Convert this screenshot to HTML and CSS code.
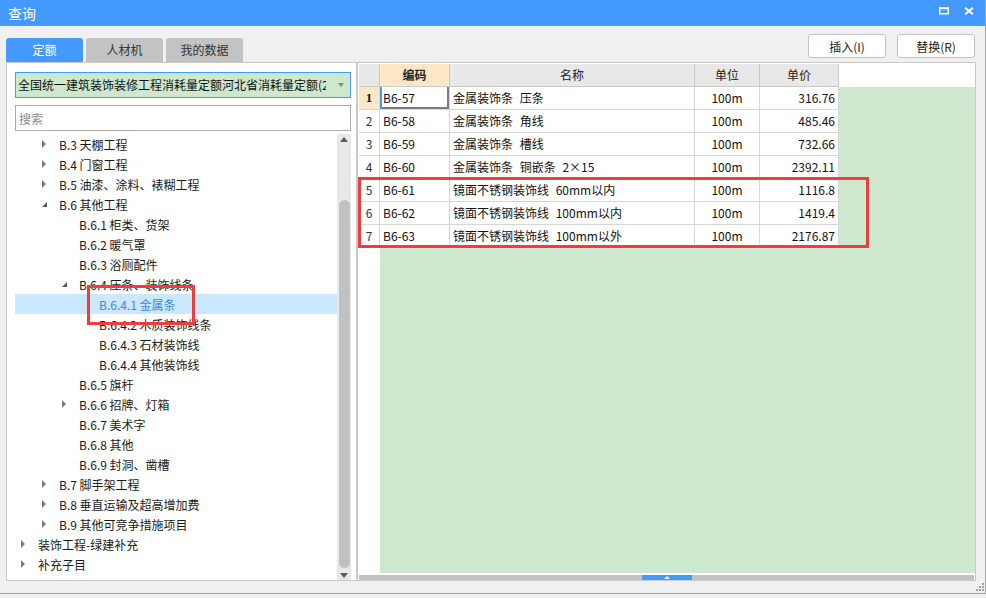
FILE: index.html
```html
<!DOCTYPE html>
<html lang="zh-CN">
<head>
<meta charset="utf-8">
<title>查询</title>
<link rel="stylesheet" href="styles.css">
</head>
<body>
<div class="window">
  <div class="titlebar">
    <span class="title">查询</span>
    <div class="winctl">
      <svg class="ico-max" width="10" height="8" viewBox="0 0 10 8"><path fill="#fff" fill-rule="evenodd" d="M0 0H10V7.5H0Z M1.5 2.3V6H8.5V2.3Z"/></svg>
      <svg class="ico-close" width="10" height="8" viewBox="0 0 10 8"><path d="M1.2 0.8L8.8 7.2M8.8 0.8L1.2 7.2" stroke="#fff" stroke-width="2.1"/></svg>
    </div>
  </div>

  <div class="toolbar">
    <div class="tabs">
      <div class="tab active">定额</div>
      <div class="tab">人材机</div>
      <div class="tab">我的数据</div>
    </div>
    <div class="actions">
      <button class="btn">插入(I)</button>
      <button class="btn">替换(R)</button>
    </div>
  </div>

  <div class="panes">
    <div class="left">
      <div class="combo">
        <span class="combo-text">全国统一建筑装饰装修工程消耗量定额河北省消耗量定额(2012)</span>
        <span class="combo-arrow"></span>
      </div>
      <input class="search" type="text" placeholder="搜索">
      <div class="treewrap">
        <div class="tree">
          <div class="node l1"><span class="tw"><i class="col"></i></span>B.3 天棚工程</div>
          <div class="node l1"><span class="tw"><i class="col"></i></span>B.4 门窗工程</div>
          <div class="node l1"><span class="tw"><i class="col"></i></span>B.5 油漆、涂料、裱糊工程</div>
          <div class="node l1"><span class="tw"><i class="exp"></i></span>B.6 其他工程</div>
          <div class="node l2"><span class="tw"></span>B.6.1 柜类、货架</div>
          <div class="node l2"><span class="tw"></span>B.6.2 暖气罩</div>
          <div class="node l2"><span class="tw"></span>B.6.3 浴厕配件</div>
          <div class="node l2"><span class="tw"><i class="exp"></i></span>B.6.4 压条、装饰线条</div>
          <div class="node l3 sel"><span class="tw"></span>B.6.4.1 金属条</div>
          <div class="node l3"><span class="tw"></span>B.6.4.2 木质装饰线条</div>
          <div class="node l3"><span class="tw"></span>B.6.4.3 石材装饰线</div>
          <div class="node l3"><span class="tw"></span>B.6.4.4 其他装饰线</div>
          <div class="node l2"><span class="tw"></span>B.6.5 旗杆</div>
          <div class="node l2"><span class="tw"><i class="col"></i></span>B.6.6 招牌、灯箱</div>
          <div class="node l2"><span class="tw"></span>B.6.7 美术字</div>
          <div class="node l2"><span class="tw"></span>B.6.8 其他</div>
          <div class="node l2"><span class="tw"></span>B.6.9 封洞、凿槽</div>
          <div class="node l1"><span class="tw"><i class="col"></i></span>B.7 脚手架工程</div>
          <div class="node l1"><span class="tw"><i class="col"></i></span>B.8 垂直运输及超高增加费</div>
          <div class="node l1"><span class="tw"><i class="col"></i></span>B.9 其他可竞争措施项目</div>
          <div class="node l0"><span class="tw"><i class="col"></i></span>装饰工程-绿建补充</div>
          <div class="node l0"><span class="tw"><i class="col"></i></span>补充子目</div>
        </div>
        <div class="vscroll">
          <span class="sc-up"></span>
          <span class="sc-thumb"></span>
          <span class="sc-down"></span>
        </div>
      </div>
      <div class="mark mark-left"></div>
    </div>

    <div class="right">
      <div class="grid">
        <div class="h rn"></div>
        <div class="h code">编码</div>
        <div class="h">名称</div>
        <div class="h">单位</div>
        <div class="h">单价</div>
        <div class="h blank"></div>

        <div class="c rn rn-sel">1</div>
        <div class="c code cur">B6-57</div>
        <div class="c name">金属装饰条 压条</div>
        <div class="c unit">100m</div>
        <div class="c price">316.76</div>
        <div class="g"></div>

        <div class="c rn">2</div>
        <div class="c code">B6-58</div>
        <div class="c name">金属装饰条 角线</div>
        <div class="c unit">100m</div>
        <div class="c price">485.46</div>
        <div class="g"></div>

        <div class="c rn">3</div>
        <div class="c code">B6-59</div>
        <div class="c name">金属装饰条 槽线</div>
        <div class="c unit">100m</div>
        <div class="c price">732.66</div>
        <div class="g"></div>

        <div class="c rn">4</div>
        <div class="c code">B6-60</div>
        <div class="c name">金属装饰条 铜嵌条 2×15</div>
        <div class="c unit">100m</div>
        <div class="c price">2392.11</div>
        <div class="g"></div>

        <div class="c rn">5</div>
        <div class="c code">B6-61</div>
        <div class="c name">镜面不锈钢装饰线 60mm以内</div>
        <div class="c unit">100m</div>
        <div class="c price">1116.8</div>
        <div class="g"></div>

        <div class="c rn">6</div>
        <div class="c code">B6-62</div>
        <div class="c name">镜面不锈钢装饰线 100mm以内</div>
        <div class="c unit">100m</div>
        <div class="c price">1419.4</div>
        <div class="g"></div>

        <div class="c rn">7</div>
        <div class="c code">B6-63</div>
        <div class="c name">镜面不锈钢装饰线 100mm以外</div>
        <div class="c unit">100m</div>
        <div class="c price">2176.87</div>
        <div class="g"></div>

        <div class="rn-fill"></div>
        <div class="g g-fill"></div>
      </div>
      <div class="hgap"></div>
      <div class="hscroll"><span class="hthumb"></span></div>
      <div class="mark mark-right"></div>
    </div>
  </div>

  <svg class="grip" width="10" height="9" viewBox="0 0 10 9">
    <rect x="8" y="0" width="2" height="2" fill="#a0a0a0"/>
    <rect x="5" y="3" width="2" height="2" fill="#a0a0a0"/>
    <rect x="8" y="3" width="2" height="2" fill="#a0a0a0"/>
    <rect x="2" y="6" width="2" height="2" fill="#a0a0a0"/>
    <rect x="5" y="6" width="2" height="2" fill="#a0a0a0"/>
    <rect x="8" y="6" width="2" height="2" fill="#a0a0a0"/>
  </svg>
</div>
</body>
</html>
```

FILE: styles.css
```css
* { box-sizing: border-box; }

body {
  margin: 0;
  background: #f0f0f0;
  font-family: "Noto Sans CJK SC", "Noto Sans", sans-serif;
  font-size: 12px;
  color: #1e1e1e;
}

.window {
  position: relative;
  width: 986px;
  height: 594px;
  border-right: 1px solid #a6a6a6;
  border-bottom: 1px solid #a6a6a6;
  display: flex;
  flex-direction: column;
}

/* title bar */
.titlebar {
  flex: none;
  height: 26px;
  background: #4499ff;
  color: #fff;
  display: flex;
  align-items: center;
  justify-content: space-between;
  padding: 0 11px 0 8px;
}
.title { font-size: 14px; line-height: 26px; }
.winctl { display: flex; align-items: center; gap: 15px; margin-top: -4px; }

/* toolbar */
.toolbar {
  flex: none;
  height: 36px;
  display: flex;
  justify-content: space-between;
  padding: 0 10px 0 6px;
}
.tabs { align-self: flex-end; display: flex; gap: 3px; }
.tab {
  width: 77px;
  height: 24px;
  line-height: 24px;
  text-align: center;
  background: #c3c3c3;
  color: #333;
  border-radius: 3px 3px 0 0;
}
.tab.active { background: #4499ff; color: #fff; }

.actions { display: flex; gap: 11px; padding-top: 8px; }
.btn {
  width: 78px;
  height: 24px;
  background: #fff;
  border: 1px solid #c2c2c2;
  border-radius: 3px;
  font-family: inherit;
  font-size: 12px;
  color: #222;
  padding: 0;
}

/* panes */
.panes {
  flex: none;
  height: 519px;
  display: flex;
  padding-left: 6px;
}

.left {
  position: relative;
  width: 351px;
  background: #fff;
  border: 1px solid #c9c9c9;
  padding: 9px 5px 0 8px;
  display: flex;
  flex-direction: column;
}

.combo {
  flex: none;
  height: 26px;
  border: 1px solid #4499ff;
  background: #cde8cf;
  display: flex;
  align-items: center;
  padding-left: 2px;
}
.combo-text {
  flex: 1;
  overflow: hidden;
  white-space: nowrap;
  color: #111;
  line-height: 24px;
}
.combo-arrow {
  flex: none;
  width: 0;
  height: 0;
  margin: 0 6px 0 12px;
  border-top: 4px solid #8a8a8a;
  border-left: 3px solid transparent;
  border-right: 3px solid transparent;
}

.search {
  flex: none;
  margin: 7px 0 0;
  height: 26px;
  border: 1px solid #ababab;
  padding: 0 3px;
  font-family: inherit;
  font-size: 12px;
  outline: none;
}
.search::placeholder { color: #8c8c8c; }

.treewrap {
  flex: 1;
  min-height: 0;
  margin-top: 3px;
  display: flex;
}
.tree { flex: 1; overflow: hidden; }
.node {
  height: 20px;
  display: flex;
  align-items: center;
  white-space: nowrap;
  color: #1a1a1a;
}
.node.l0 { padding-left: 6px; }
.node.l1 { padding-left: 27px; }
.node.l2 { padding-left: 47px; }
.node.l3 { padding-left: 67px; }
.node.sel { background: #cce8ff; color: #3a8ae0; }
.tw { flex: none; width: 17px; height: 20px; display: flex; align-items: center; }
.tw .col {
  width: 0; height: 0;
  border-left: 4px solid #7c7c7c;
  border-top: 4px solid transparent;
  border-bottom: 4px solid transparent;
}
.tw .exp {
  width: 0; height: 0;
  margin-top: 1px;
  border-bottom: 5px solid #555;
  border-left: 5px solid transparent;
}

.vscroll {
  flex: none;
  width: 14px;
  background: #e8e8e8;
  display: flex;
  flex-direction: column;
  align-items: center;
}
.sc-up {
  margin-top: 3px;
  width: 0; height: 0;
  border-bottom: 5px solid #5c5c5c;
  border-left: 4px solid transparent;
  border-right: 4px solid transparent;
}
.sc-thumb {
  margin-top: 58px;
  width: 11px;
  height: 368px;
  border-radius: 6px;
  background: #c1c1c1;
}
.sc-down {
  margin-top: auto;
  margin-bottom: 2px;
  width: 0; height: 0;
  border-top: 5px solid #5c5c5c;
  border-left: 4px solid transparent;
  border-right: 4px solid transparent;
}

/* right pane */
.right {
  position: relative;
  width: 619px;
  background: #fff;
  border: 1px solid #c9c9c9;
  padding: 1px 0 0 1px;
  display: flex;
  flex-direction: column;
}

.grid {
  flex: none;
  height: 509px;
  display: grid;
  grid-template-columns: 21px 70px 245px 65px 79px 1fr;
  grid-template-rows: repeat(8, 23px) 1fr;
}
.h {
  background: #e8e8e8;
  border-right: 1px solid #c9c9c9;
  border-bottom: 1px solid #c9c9c9;
  text-align: center;
  line-height: 22px;
  color: #222;
}
.h.code { background: #fde7c6; font-weight: bold; }
.h.blank { background: #fff; border: none; }

.c {
  background: #fff;
  border-right: 1px solid #d6d6d6;
  border-bottom: 1px solid #d6d6d6;
  line-height: 22px;
  white-space: pre;
  overflow: hidden;
  color: #111;
}
.c.rn { text-align: center; color: #333; }
.c.rn-sel { background: #fde7c6; font-family: "Liberation Serif", serif; font-weight: bold; font-size: 13px; color: #111; }
.c.code { padding-left: 3px; }
.c.code.cur { box-shadow: inset 2px 0 0 #4499ff, inset -2px -2px 0 #7d7d7d; }
.c.name { padding-left: 3px; word-spacing: 4px; }
.c.unit { text-align: center; }
.c.price { text-align: right; padding-right: 3px; }
.g { background: #cde8cf; }
.rn-fill { background: #fff; }
.g-fill { grid-column: 2 / -1; }

.hgap { flex: none; height: 2px; }
.hscroll {
  flex: none;
  height: 5px;
  background: #c3c3c3;
  position: relative;
  margin-right: 1px;
}
.hthumb {
  position: absolute;
  left: 283px;
  top: 0;
  width: 50px;
  height: 5px;
  background: #4499ff;
}
.hthumb::after {
  content: "";
  position: absolute;
  left: 22px;
  top: 1px;
  border-bottom: 3px solid #fff;
  border-left: 3px solid transparent;
  border-right: 3px solid transparent;
}

/* annotation boxes */
.mark {
  position: absolute;
  border: 3px solid #f23c3c;
  pointer-events: none;
}
.mark-left { left: 80px; top: 222px; width: 108px; height: 40px; }
.mark-right { left: 0; top: 114px; width: 511px; height: 71px; }

.grip { position: absolute; right: 1px; bottom: 1px; }
```
